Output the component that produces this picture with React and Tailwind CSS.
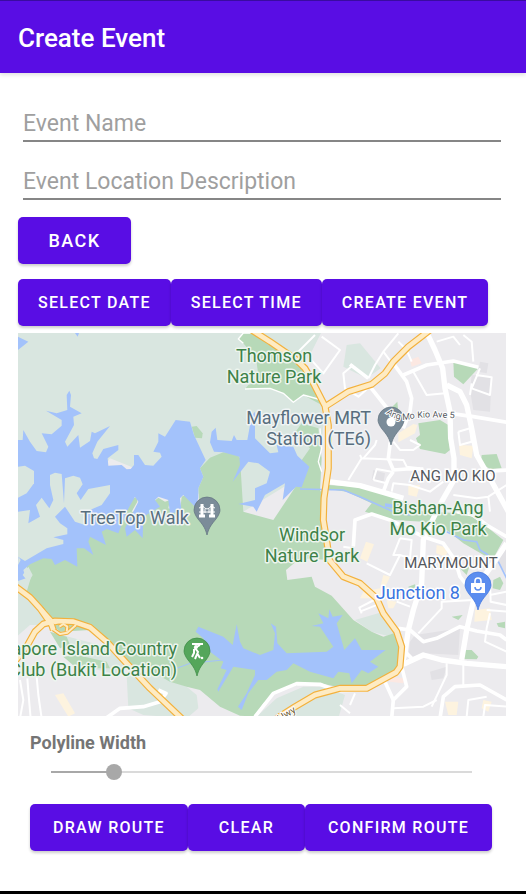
import { useState } from "react";

const HIGHWAYS = [
  "M725 15 780 50 860 105 885 130 905 165 945 243 955 300 955 430 942 520 940 585 950 645 958 705 1000 755 1050 775 1100 820 1120 865 1160 920 1175 965 1170 1025 1158 1042 1070 1090 990 1090 915 1110 855 1145 800 1180",
  "M945 245 1015 200 1085 178 1125 145 1150 110 1195 65 1260 15",
  "M10 780 60 817 90 850 125 900 130 915",
  "M10 1015 50 965 75 920 100 897 135 888 190 890 240 907 290 950 350 1015 420 1090 520 1185",
];
const RAMPS = ["M95 850 135 895 150 890", "M128 912 150 927 172 923 198 900", "M148 905 160 897 172 905 170 920"];

const MAJOR_ROADS = [
  "M1250 22 1275 75 1298 130 1305 190 1320 260 1322 340 1332 400 1332 465 1295 530 1265 590 1240 645 1235 775 1210 855 1195 915 1185 985 1172 1030",
  "M1310 180 1350 200 1370 240 1385 310 1400 390 1440 460 1495 560",
  "M955 470 1050 482 1120 502 1180 520",
  "M1180 1018 1240 990 1295 1005 1370 1015 1490 1025",
  "M1490 655 1450 715 1400 785 1370 915 1355 1005",
];
const ROADS = [
  "M1320 265 1390 275 1490 292",
  "M1150 115 1190 170 1205 220 1200 260 1180 310",
  "M1141 350 1135 400 1150 435 1190 432 1240 432",
  "M1120 500 1135 460 1150 440",
  "M1075 160 1020 118",
  "M1080 185 1138 258",
  "M1180 150 1250 120 1330 108 1405 127",
  "M1030 665 1035 585 1085 567 1140 585 1240 635 1300 655 1335 705 1350 755 1370 780",
  "M1340 560 1390 570 1430 600 1490 635",
  "M1165 910 1200 915 1240 950 1280 940 1350 905 1400 918 1470 930 1490 945",
  "M1175 1025 1190 1085 1150 1125 1145 1180",
  "M1125 1070 1150 1125",
  "M1290 1180 1300 1115 1335 1085 1410 1080 1490 1125",
  "M735 1175 790 1105 860 1076 930 1078 980 1097 1070 1095",
  "M280 1185 330 1150 400 1145 450 1130 468 1105 445 1095",
  "M1185 980 1205 1000",
  "M1410 440 1490 435",
];
const STREETS = [
  "M850 95 915 30 M935 35 990 75 940 145 900 100",
  "M1075 160 1095 120 1120 80 1165 25",
  "M1120 80 1150 120 M1165 50 1190 75 1205 110",
  "M1030 120 1000 145 1005 190 1045 215 1085 180",
  "M1210 140 1250 210 1305 205",
  "M1410 130 1385 190 1440 210 1445 157 1398 150",
  "M1385 175 1380 210 M1280 50 1330 35 1350 60 M1360 30 1385 50 1390 110",
  "M1015 465 1055 400 1050 390 M1055 400 1180 405 1190 425 1230 430",
  "M1060 400 1095 360 1100 345",
  "M1090 465 1100 432 1145 440 M1090 465 1130 475",
  "M1150 350 1170 375 1210 375 1230 360 1200 345",
  "M1145 500 1150 475 1200 480 1260 500 1300 470",
  "M1330 510 1400 520 1435 515 1440 560 M1435 515 1490 480",
  "M1345 320 1380 310 1385 350 1350 360 1345 320",
  "M1070 715 1140 750 1170 690 1200 700 1205 645 1170 640",
  "M1170 640 1150 690 1170 690",
  "M1000 665 1030 670 M1050 860 1105 838 1098 822 1048 848 1055 865",
  "M1225 925 1295 850 1295 830 1390 825 M1160 830 1200 845",
  "M1440 810 1490 800 M1440 770 1442 830 1490 840 M1430 855 1490 860",
  "M1440 865 1430 910 1425 950 1490 980",
  "M1150 1150 1240 1145 1280 1125 M1020 1140 1035 1105",
  "M990 1140 1020 1165 M1360 1015 1360 1085 M1310 1015 1310 1050 1265 1145",
  "M30 1065 40 1125 30 1180 M52 1060 55 1100 62 1180 M80 1055 85 1110 95 1180",
  "M1370 1175 1375 1125 1430 1115 M1420 1175 1425 1140 1490 1145",
];

const PALE = [
  "M20 20H935L900 90 870 130 930 205 940 300 930 420 700 560 300 400 100 700 65 800 130 900 60 900 20 935Z",
  "M1010 60 1050 55 1112 130 1070 160 1000 125Z",
  "M1035 885 1120 860 1168 920 1130 932 1085 920Z",
  "M430 1040 530 1085 560 1110 565 1150 530 1180 400 1170 355 1150 350 1050Z",
  "M740 1175 800 1120 880 1085 940 1085 1005 1110 985 1180Z",
  "M130 925 175 935 270 960 350 1010 330 1050 200 1020Z",
];
const GREEN = [
  "M565 490 580 455 570 430 600 398 640 382 680 385 690 400 700 560 790 585 860 480 865 420 900 370 850 330 875 295 925 310 935 400 930 500 945 485 940 585 952 645 955 705 870 700 828 735 832 765 905 755 915 785 965 812 1030 885 1085 920 1120 935 1165 920 1170 1025 1110 1065 1060 1085 980 1085 930 1075 880 1075 800 1100 760 1135 735 1175 690 1172 630 1145 570 1095 530 1085 480 1070 400 1025 350 1015 290 965 240 915 150 920 100 875 50 800 65 750 45 718 100 680 300 550 350 530 380 515 382 530 365 560 430 560 445 540 430 530 445 518 465 530 480 525 475 550 510 560 515 515 525 510 550 540 570 560Z",
  "M700 24 727 24 785 60 865 110 905 180 935 240 880 210 850 232 820 205 780 190 705 192 715 180 748 170 738 100 700 55 685 42Z",
  "M545 305 560 303 578 325 576 340 555 338Z",
  "M1330 110 1405 130 1360 178 1332 155Z",
  "M1225 295 1290 285 1315 300 1320 375 1305 387 1230 372 1218 340 1230 330Z",
  "M1415 390 1460 387 1475 430 1440 432 1412 415Z",
  "M1140 252 1162 230 1165 262Z",
  "M955 480 1040 485 1140 510 1240 560 1370 565 1430 605 1480 645 1450 700 1430 695 1360 655 1310 615 1240 590 1150 585 1065 560 1085 535 1010 500 955 492Z",
  "M1450 765 1470 755 1480 775 1470 795 1448 790Z",
  "M1360 975 1385 975 1405 995 1400 1003 1362 1002Z M1325 875 1358 870 1345 885Z M1195 785 1215 778 1220 795 1200 800Z M1460 895 1485 890V910L1465 905Z",
  "M1350 730 1380 720 1370 750Z",
  "M120 920 170 935 180 960 150 970Z",
  "M160 995 200 990 290 1010 300 1030 200 1030Z",
];
const WATER = [
  "M24 450V345L38 345 40 315 60 350 80 378 108 382 115 365 95 325 125 328 155 302 155 285 108 257 140 265 172 255 170 210 178 197 183 210 180 245 215 265 190 275 192 300 165 350 172 365 205 330 210 368 240 348 245 320 255 325 300 303 262 350 247 385 252 400 262 402 280 372 325 360 325 375 293 400 295 422 335 420 350 433 362 432 372 420V390H385L405 420 430 422 455 395 450 383 430 380 445 350V325L465 335 497 285 540 290 552 330 587 405 570 430 580 455 565 490 565 520 555 545 520 510 510 520 515 560 480 565 475 525 445 515 435 525 450 545 400 575 398 640 375 615 350 635 345 610 385 530 375 515 350 560 325 625 290 612 275 620 288 660 240 635 235 650 250 690 222 670 200 670 202 725 165 705 135 720 125 702 100 700 60 718 40 735 48 760 24 768Z",
  "M600 352 605 320 617 308 622 345 665 348 672 330 680 345 712 345 720 300 688 267 710 290 735 260 735 340 780 385 805 382 800 360 850 365 862 392 898 425 875 487 858 485 818 525 825 475 765 510 740 560 730 545 685 537 735 525 735 490 770 475 780 440 745 415 715 410 668 470 690 420 688 395 640 382 612 380Z",
  "M565 905 640 935 668 960 680 898 690 950 700 970 750 990 790 975 795 925 782 895 798 905 802 955 830 985 950 980 970 965 930 905 905 903 940 895 925 865 955 880 958 853 968 875 998 870 980 895 1003 975 1035 940 1055 975 1127 975 1080 1010 1105 1025 1075 1045 1055 1035 1025 1075 1018 1045 985 1040 970 1060 900 1040 850 1015 830 1035 800 1040 770 1065 745 1065 715 1105 695 1155 684 1145 710 1105 735 1050 735 1035 670 1025 640 1075 625 1100 622 1093 650 1035 632 1030 640 1010 600 980 580 940 557 920Z",
  "M24 35 55 50 24 75Z M195 24H207L203 35Z M1125 535 1148 538 1152 550 1125 545Z",
];
const ISLANDS = [
  "M24 425 45 422 72 438 72 475 50 505 24 518Z",
  "M120 480 120 450 135 443 155 447 162 535 165 460 190 452 210 458 218 478 200 505 212 525 235 492 300 480 300 505 275 540 235 557 225 600 195 590 165 545 135 575 150 595 172 610 172 628 130 637 160 645 160 657 110 670 45 708 24 695V560L60 555 55 595 90 575 78 540 95 518 118 550 130 525Z",
  "M24 720 32 705 25 695Z M55 725 68 750 45 790 24 780 50 765 38 750Z",
];
const SHADE = [
  "M1385 150 1445 155 1440 260 1390 255 1380 195Z M1410 110 1435 115 1430 145 1405 140Z M1090 435 1125 445 1120 475 1085 465Z",
  "M1215 930 1350 910 1345 990 1240 985 1195 1000 1200 950Z M1260 1040 1310 1025 1300 1060 1265 1065Z M1460 685 1488 660V745L1465 715Z",
];
const SAND = [
  "M1165 325 1210 297 1222 300 1215 325 1165 352Z M1347 360 1390 362 1385 400 1350 390Z M1195 482 1230 480 1220 515 1195 510Z",
  "M1068 650 1092 658 1072 710 1050 700Z M1120 750 1140 755 1110 820 1050 820 1060 800 1110 790Z M1280 660 1320 670 1305 695 1278 685Z",
  "M1395 855 1440 850 1445 885 1393 890Z M1130 825 1160 830 1150 850 1135 850Z M135 1110 160 1105 195 1165 175 1175Z M1305 1130 1345 1130 1340 1170 1315 1170Z M1420 1125 1445 1130 1435 1160 1415 1150Z",
];
const ROSE = "M1200 105 1225 95 1235 115 1205 125Z M1135 1055 1185 1060 1180 1075 1140 1070Z";

const label = "stroke-[3px] [paint-order:stroke] [stroke-linejoin:round] text-[18px]";

function Shapes({ list, className }) {
  return (
    <g className={className}>
      {list.map((d) => (
        <path key={d} d={d} />
      ))}
    </g>
  );
}

function Pin({ x, y, color, edge, children }) {
  return (
    <g transform={`translate(${x} ${y})`}>
      <path
        d="M0 24C-2 16-5 13-9 8C-12 4-13 1-13-1A13 13 0 0 1 13-1C13 1 12 4 9 8C5 13 2 16 0 24Z"
        fill={color}
        stroke={edge}
        strokeWidth="0.7"
      />
      {children}
    </g>
  );
}

function RouteMap() {
  return (
    <svg viewBox="0 0 488 383" role="img" aria-label="Map" className="mt-[7px] block w-full bg-[#ecebee]">
      <defs>
        <path id="avenue" d="M368 80 Q378 89 393 86 T450 86" />
      </defs>
      <g transform="translate(-8 -8) scale(0.33333)">
        <Shapes list={SHADE} className="fill-[#e2e1e5]" />
        <Shapes list={SAND} className="fill-[#fdf3df]" />
        <path d={ROSE} className="fill-[#fce8e2]" />
        <Shapes list={PALE} className="fill-[#d9e6e0]" />
        <Shapes list={GREEN} className="fill-[#b7d9b8]" />
        <Shapes list={WATER} className="fill-[#a3c2fb]" />
        <Shapes list={ISLANDS} className="fill-[#d9e6e0]" />
        <g className="fill-none stroke-[#a3c2fb] stroke-[5px]">
          <path d="M870 492 1000 495 1050 515 1150 560 1200 570" />
          <path d="M1310 620 1360 645 1400 650 1410 675 1435 690M1465 710 1490 760" />
          <path d="M640 1005 540 1015 500 1030" className="stroke-[3px]" />
        </g>
        <g className="fill-none stroke-white [stroke-linejoin:round]">
          <Shapes list={STREETS} className="stroke-[6px]" />
          <Shapes list={ROADS} className="stroke-[11px]" />
          <Shapes list={MAJOR_ROADS} className="stroke-[16px]" />
          <path d="M705 192 780 190 820 205 850 232 880 210 935 225M727 24 700 24 685 42 700 55" className="stroke-[4px]" />
          <path d="M930 310 935 370 925 410 935 440" className="stroke-[4px]" />
        </g>
        <g className="fill-none [stroke-linejoin:round]">
          <Shapes list={RAMPS} className="stroke-[#f3b13c] stroke-[12px]" />
          <Shapes list={HIGHWAYS} className="stroke-[#f3b13c] stroke-[21px]" />
          <Shapes list={RAMPS} className="stroke-[#feebc3] stroke-[6px]" />
          <Shapes list={HIGHWAYS} className="stroke-[#feebc3] stroke-[14px]" />
        </g>
      </g>

      <Pin x="189" y="178" color="#7b8c99" edge="#62737f">
        <g className="fill-none stroke-white stroke-3">
          <path d="M-5-7V6M5-7V6M-8 5H-2M2 5H8" />
          <path d="M-8 1H8M-8-3Q-6-3-5-6Q0 2 5-6Q6-3 8-3M-2-2V2M2-2V2" className="stroke-1" />
        </g>
      </Pin>
      <Pin x="373" y="88" color="#7b8c99" edge="#62737f">
        <circle r="4.5" cy="1" fill="white" />
      </Pin>
      <Pin x="179" y="319" color="#54a65b" edge="#3c8a45">
        <g className="fill-none stroke-white stroke-2">
          <path d="M-5-8H6M3-7-2-4 1 0-2 7M-3-3V1L-5 5M0 1 3 6" />
        </g>
        <circle cx="-1" cy="-5" r="2" fill="white" />
        <circle cx="5" cy="6" r="1.3" fill="white" />
      </Pin>
      <Pin x="460" y="253" color="#5b8def" edge="#3f74dd">
        <path d="M-7-3H7V7H-7Z" fill="white" />
        <path d="M-3-3V-5A3 3 0 0 1 3-5V-3" fill="none" stroke="white" strokeWidth="1.6" />
        <path d="M-3 1A3 3 0 0 0 3 1" fill="none" stroke="#5b8def" strokeWidth="1.5" />
      </Pin>

      <g className={`${label} fill-[#3d8248] stroke-[#edf5ee]`}>
        <text x="256" y="29" textAnchor="middle">Thomson</text>
        <text x="256" y="50" textAnchor="middle">Nature Park</text>
        <text x="294" y="208" textAnchor="middle">Windsor</text>
        <text x="294" y="229" textAnchor="middle">Nature Park</text>
        <text x="420" y="181" textAnchor="middle">Bishan-Ang</text>
        <text x="420" y="202" textAnchor="middle">Mo Kio Park</text>
        <text x="159" y="322" textAnchor="end">apore Island Country</text>
        <text x="159" y="343" textAnchor="end">Club (Bukit Location)</text>
      </g>
      <g className={`${label} fill-[#586e7e] stroke-[#f0f4f5]`}>
        <text x="353" y="91" textAnchor="end">Mayflower MRT</text>
        <text x="353" y="112" textAnchor="end">Station (TE6)</text>
        <text x="171" y="191" textAnchor="end">TreeTop Walk</text>
      </g>
      <text x="442" y="266" textAnchor="end" className={`${label} fill-[#3a74e0] stroke-white`}>Junction 8</text>
      <g className="fill-[#54585d] stroke-white stroke-[3px] text-[15px] [paint-order:stroke]">
        <text x="435" y="148" textAnchor="middle">ANG MO KIO</text>
        <text x="433" y="235" textAnchor="middle">MARYMOUNT</text>
      </g>
      <text className="fill-[#54585d] stroke-white stroke-2 text-[9px] [paint-order:stroke]">
        <textPath href="#avenue">Ang Mo Kio Ave 5</textPath>
      </text>
      <text transform="translate(262 389) rotate(-32)" className="fill-[#6b5a35] stroke-white stroke-2 text-[10px] [paint-order:stroke]">
        Hwy
      </text>
    </svg>
  );
}

function Button({ className = "", children }) {
  return (
    <button
      type="button"
      className={`h-[47px] rounded-[5px] bg-[#590de4] font-medium tracking-[0.08em] whitespace-nowrap text-white uppercase shadow-[0_2px_3px_rgba(0,0,0,0.2)] ${className}`}
    >
      {children}
    </button>
  );
}

function Field({ label: name }) {
  return (
    <input
      type="text"
      aria-label={name}
      placeholder={name}
      className="h-[42px] border-b-2 border-[#868686] bg-transparent pt-[6px] text-[23px] text-gray-900 outline-none placeholder:text-[#9f9f9f]"
    />
  );
}

const MAX_WIDTH = 22;

export default function App() {
  const [width, setWidth] = useState(3);
  const filled = (width / MAX_WIDTH) * 100;
  return (
    <div className="flex min-h-screen flex-col bg-white font-[Roboto,sans-serif]">
      <header className="flex h-[73px] items-center border-t border-[#3a0ba0] bg-[#590de4] px-[18px] pt-[2px] shadow-[0_2px_4px_rgba(0,0,0,0.12)]">
        <h1 className="text-[26px] font-medium text-white">Create Event</h1>
      </header>

      <main className="flex-1 pt-[27px] pr-5 pl-[18px]">
        <form className="flex flex-col gap-4 pr-[5px] pl-[5px]">
          <Field label="Event Name" />
          <Field label="Event Location Description" />
        </form>
        <div className="mt-[17px]">
          <Button className="min-w-[113px] text-[18px]">Back</Button>
        </div>
        <div className="mt-[15px] flex text-[16px]">
          <Button className="px-5">Select Date</Button>
          <Button className="px-5">Select Time</Button>
          <Button className="px-5">Create Event</Button>
        </div>

        <RouteMap />

        <section className="pt-[15px] pl-3">
          <label htmlFor="polyline-width" className="block text-[18px] leading-6 font-bold text-[#757575]">
            Polyline Width
          </label>
          <div className="mt-[9px] pr-[34px] pl-[21px]">
            <input
              id="polyline-width"
              type="range"
              min="0"
              max={MAX_WIDTH}
              value={width}
              onChange={(e) => setWidth(Number(e.target.value))}
              style={{ backgroundImage: `linear-gradient(to right, #a8a8a8 ${filled}%, #dadada ${filled}%)` }}
              className="block h-4 w-full appearance-none bg-[length:100%_2px] bg-center bg-no-repeat [&::-webkit-slider-thumb]:size-4 [&::-webkit-slider-thumb]:appearance-none [&::-webkit-slider-thumb]:rounded-full [&::-webkit-slider-thumb]:bg-[#a8a8a8]"
            />
          </div>
          <div className="mt-6 flex text-[16px]">
            <Button className="px-[23px]">Draw Route</Button>
            <Button className="min-w-[117px] px-[23px]">Clear</Button>
            <Button className="px-[23px]">Confirm Route</Button>
          </div>
        </section>
      </main>

      <footer className="h-[3px] bg-black" />
    </div>
  );
}
